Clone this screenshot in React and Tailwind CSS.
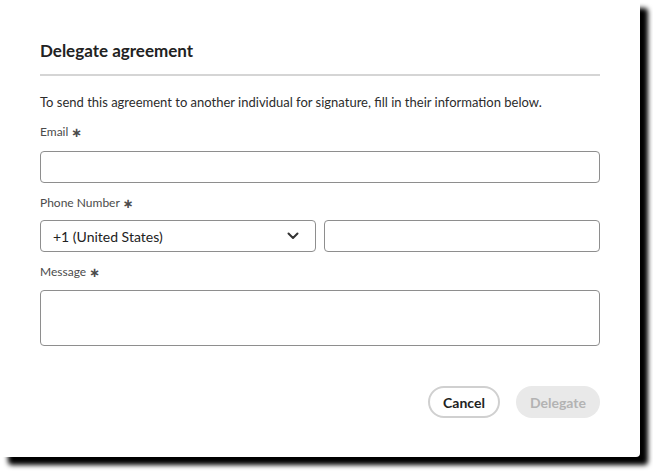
import React from 'react';

function Label({ children }) {
  return (
    <div className="h-4 flex items-center text-[12px] leading-[16px] text-[#4b4b4b]">
      <span>{children}</span>
      <span className="ml-[3px] text-[13px] leading-none font-bold" style={{ fontFamily: '"DejaVu Sans", sans-serif' }}>∗</span>
    </div>
  );
}

export default function App() {
  return (
    <div className="w-[653px] h-[472px] bg-white" style={{ fontFamily: 'Lato, "Open Sans", sans-serif' }}>
      <div className="w-[640px] h-[457px] bg-white rounded-[4px] shadow-[8px_8px_5px_#000] px-10 pt-[41px]">
        <h1 className="text-[17px] leading-[20px] font-bold text-[#222]">Delegate agreement</h1>
        <div className="mt-[13px] h-[2px] bg-[#d5d5d5]" />
        <p className="mt-[17px] text-[13px] leading-[18px] text-[#2c2c2c]">
          To send this agreement to another individual for signature, fill in their information below.
        </p>

        <div className="mt-[13px]">
          <Label>Email</Label>
        </div>
        <input className="mt-[11px] block w-full h-8 border border-[#8e8e8e] rounded-[4px] px-3 text-[13px] outline-none" />

        <div className="mt-[12px]">
          <Label>Phone Number</Label>
        </div>
        <div className="mt-[9px] flex gap-2">
          <button className="flex-1 h-8 border border-[#8e8e8e] rounded-[4px] pl-3 pr-3 flex items-center justify-between text-[14px] text-[#222]">
            <span>+1 (United States)</span>
            <svg width="12" height="8" viewBox="0 0 12 8" className="mr-1">
              <path d="M1.5 1.5 L6 6 L10.5 1.5" fill="none" stroke="#333" strokeWidth="2" strokeLinecap="round" strokeLinejoin="round" />
            </svg>
          </button>
          <input className="flex-1 h-8 border border-[#8e8e8e] rounded-[4px] px-3 text-[13px] outline-none min-w-0" />
        </div>

        <div className="mt-[12px]">
          <Label>Message</Label>
        </div>
        <textarea className="mt-[10px] block w-full h-[56px] border border-[#8e8e8e] rounded-[4px] px-3 py-2 text-[13px] resize-none outline-none" />

        <div className="mt-[40px] flex justify-end gap-4">
          <button className="h-8 w-[72px] rounded-full border-2 border-[#d0d0d0] bg-white text-[14px] font-bold text-[#222]">
            Cancel
          </button>
          <button className="h-8 w-[84px] rounded-full bg-[#e9e9e9] text-[14px] font-bold text-[#b3b3b3]">
            Delegate
          </button>
        </div>
      </div>
    </div>
  );
}
